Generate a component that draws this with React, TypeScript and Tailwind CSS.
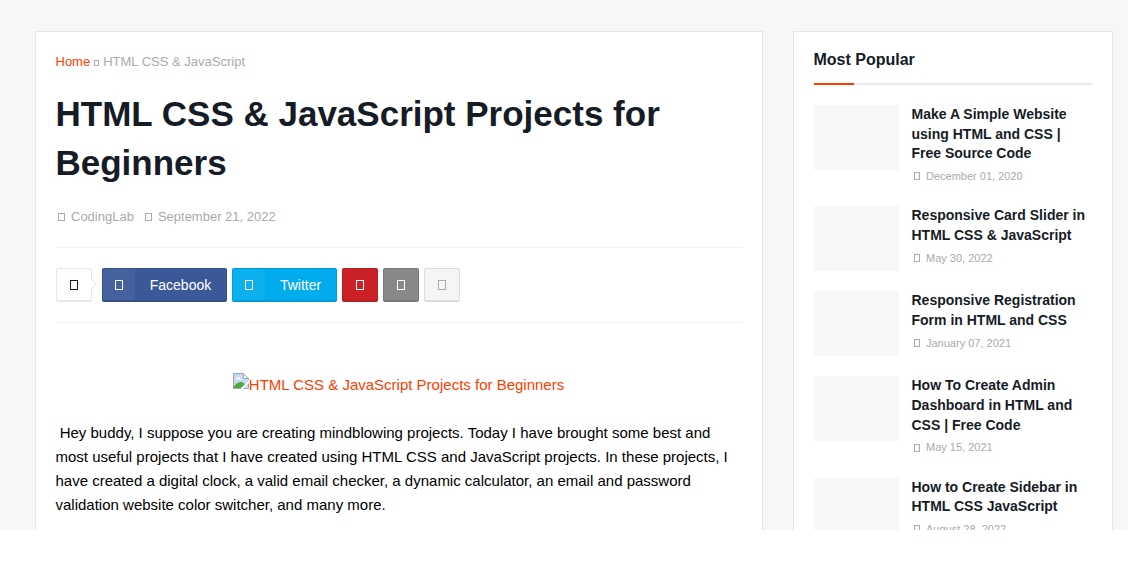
import React from "react";

const posts = [
  { lines: ["Make A Simple Website", "using HTML and CSS |", "Free Source Code"], date: "December 01, 2020", size: "h-[81.2px]" },
  { lines: ["Responsive Card Slider in", "HTML CSS & JavaScript"], date: "May 30, 2022", size: "h-[65px]" },
  { lines: ["Responsive Registration", "Form in HTML and CSS"], date: "January 07, 2021", size: "h-[65.2px]" },
  { lines: ["How To Create Admin", "Dashboard in HTML and", "CSS | Free Code"], date: "May 15, 2021", size: "h-[81.2px]" },
  { lines: ["How to Create Sidebar in", "HTML CSS JavaScript"], date: "August 28, 2022", size: "h-[65px]" },
];

function Glyph({ className }: { className: string }) {
  return <span className={`inline-block shrink-0 border border-current ${className}`} />;
}

function BrokenImage() {
  return (
    <svg width="16" height="16" viewBox="0 0 16 16" className="shrink-0">
      <path d="M0.5 15.5V0.5H10.5L15.5 5.5V7" fill="none" stroke="#a3a7aa" />
      <path d="M1 1H10V6H15V8L8 15H1Z" fill="#c3d9f5" />
      <path d="M10.5 0.5V5.5H15.5Z" fill="#fff" stroke="#a3a7aa" />
      <path d="M2.5 6.5Q2.5 5 4 5Q4.5 3.5 6 4Q7 4.5 7 5.5Q8 5.5 8 6.5Z" fill="#fff" />
      <path d="M1 15V13Q4 9.5 7 9Q9.5 8.5 12 11L8 15Z" fill="#4ea83a" />
      <path d="M0 15.5H8" stroke="#a3a7aa" />
      <path d="M11 15L15 11V15Z" fill="#c3d9f5" />
      <path d="M10.5 15.5H15.5V10.5" fill="none" stroke="#a3a7aa" />
    </svg>
  );
}

function SmallShare({ className }: { className: string }) {
  return (
    <span className={`flex h-[34px] w-9 items-center justify-center rounded-xs border border-b-2 ${className}`}>
      <Glyph className="mr-px h-[10px] w-2" />
    </span>
  );
}

export default function App() {
  return (
    <div className="h-[570px] overflow-hidden bg-white font-['Liberation_Sans',Arial,sans-serif]">
      <div className="flex h-[530px] gap-[30px] overflow-hidden bg-[#f7f7f7] pt-[31px] pl-[35px]">
        <main className="h-[600px] w-[728px] shrink-0 border border-[#e6e6e6] bg-white px-5 pt-5">
          <nav className="-ml-[0.5px] flex h-5 items-center text-[13px] whitespace-nowrap text-[#aaa]">
            <a className="text-[#ff3d00]">Home</a>
            <Glyph className="mt-[2px] mr-1 ml-1 h-[6px] w-[5px]" />
            <span>HTML CSS &amp; JavaScript</span>
          </nav>
          <h1 className="mt-[17px] -ml-[0.5px] text-[35px] leading-[49px] font-bold whitespace-nowrap text-[#161c26]">
            HTML CSS &amp; JavaScript Projects for
            <br />
            Beginners
          </h1>
          <div className="mt-5 flex h-5 items-center text-[13px] whitespace-nowrap text-[#aaa]">
            <Glyph className="mr-[6px] ml-[2px] h-2 w-[7px]" />
            <span>CodingLab</span>
            <Glyph className="mr-[6px] ml-[11px] h-2 w-[7px]" />
            <span>September 21, 2022</span>
          </div>
          <div className="mt-5 flex h-[76px] items-center border-y border-[#f2f2f2] text-sm text-white">
            <div className="relative mr-[10px]">
              <SmallShare className="border-[#e6e6e6] text-[#161c26]" />
              <svg className="absolute top-[11px] left-[35px]" width="6" height="10" viewBox="0 0 6 10">
                <path d="M0 0L5 5L0 10Z" fill="#fff" />
                <path d="M0.5 0.5L5 5L0.5 9.5" fill="none" stroke="#e6e6e6" />
              </svg>
            </div>
            <span className="flex h-[34px] w-[125px] rounded-xs border border-b-2 border-[#355088] bg-[#3b5999]">
              <span className="flex w-8 items-center justify-center bg-white/5">
                <Glyph className="h-[10px] w-2" />
              </span>
              <span className="flex flex-1 items-center justify-center">Facebook</span>
            </span>
            <span className="ml-[5px] flex h-[34px] w-[105px] rounded-xs border border-b-2 border-[#009bd7] bg-[#00acee]">
              <span className="flex w-8 items-center justify-center bg-white/5">
                <Glyph className="h-[10px] w-2" />
              </span>
              <span className="flex flex-1 items-center justify-center">Twitter</span>
            </span>
            <div className="ml-[5px] flex gap-[5px]">
              <SmallShare className="border-[#b51e23] bg-[#ca2127]" />
              <SmallShare className="border-[#7a7a7a] bg-[#888]" />
              <SmallShare className="border-[#dcdcdc] bg-[#f5f5f5] text-[#aaa]" />
            </div>
          </div>
          <div className="mt-[50px] flex h-6 justify-center pr-px text-[15px] leading-6 whitespace-nowrap text-[#ff3d00]">
            <BrokenImage />
            <span>HTML CSS &amp; JavaScript Projects for Beginners</span>
          </div>
          <p className="mt-6 -ml-[0.5px] text-[15px] leading-6 whitespace-nowrap text-black">
            &nbsp;Hey buddy, I suppose you are creating mindblowing projects. Today I have brought some best and
            <br />
            most useful projects that I have created using HTML CSS and JavaScript projects. In these projects, I
            <br />
            have created a digital clock, a valid email checker, a dynamic calculator, an email and password
            <br />
            validation website color switcher, and many more.
          </p>
        </main>
        <aside className="h-[600px] w-[320px] shrink-0 border border-[#e6e6e6] bg-white px-5 pt-[17px]">
          <h2 className="-ml-[0.5px] h-[34px] text-base leading-[22px] font-bold text-[#161c26]">Most Popular</h2>
          <div className="h-[2px] bg-[#ebebeb]">
            <div className="h-full w-10 bg-[#ff3d00]" />
          </div>
          <div className="mt-5 flex flex-col gap-5">
            {posts.map((post) => (
              <article key={post.date} className={`flex gap-[13px] ${post.size}`}>
                <div className="h-[65px] w-[85px] shrink-0 bg-[#f7f7f7]" />
                <div className="whitespace-nowrap">
                  <h3 className="-ml-[0.5px] text-sm leading-[19.6px] font-bold text-[#161c26]">
                    {post.lines.map((line) => (
                      <span key={line} className="block">{line}</span>
                    ))}
                  </h3>
                  <div className="mt-[5.2px] flex items-center text-[11px] leading-[15px] text-[#aaa]">
                    <Glyph className="mr-[6px] ml-[2px] h-2 w-[6px]" />
                    {post.date}
                  </div>
                </div>
              </article>
            ))}
          </div>
        </aside>
      </div>
    </div>
  );
}
